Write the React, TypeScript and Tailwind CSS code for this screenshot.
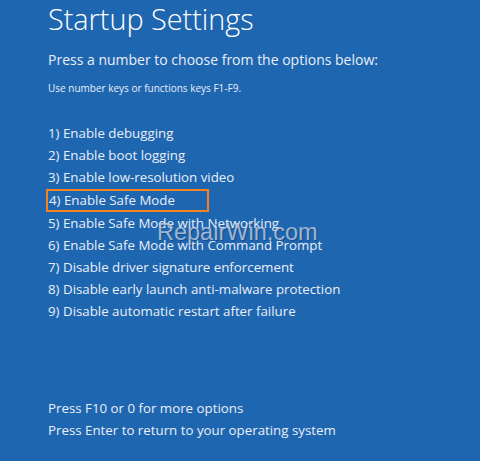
export default function App() {
  const options = [
    "1) Enable debugging",
    "2) Enable boot logging",
    "3) Enable low-resolution video",
    "4) Enable Safe Mode",
    "5) Enable Safe Mode with Networking",
    "6) Enable Safe Mode with Command Prompt",
    "7) Disable driver signature enforcement",
    "8) Disable early launch anti-malware protection",
    "9) Disable automatic restart after failure",
  ];

  return (
    <div
      className="relative w-[480px] h-[461px] overflow-hidden bg-[#1f66b1] text-[#e9eff7]"
      style={{ fontFamily: '"Open Sans", "Noto Sans", sans-serif' }}
    >
      <div className="pl-[48px] pt-[1px]">
        <h1 className="text-[28.8px] font-light leading-[36px] text-white">Startup Settings</h1>
        <p className="mt-[12px] text-[14px] leading-[22px]">Press a number to choose from the options below:</p>
        <p className="mt-[8px] text-[10px] leading-[18px]">Use number keys or functions keys F1-F9.</p>

        <ul className="mt-[25px]">
          {options.map((o, i) => (
            <li key={o} className="text-[13.3px] leading-[22.2px]">
              {i === 3 ? (
                <span className="-ml-[2px] inline-block w-[163px] border-2 border-[#f5821f] pl-[1px] leading-[19px]">
                  {o}
                </span>
              ) : (
                o
              )}
            </li>
          ))}
        </ul>

        <div className="mt-[74px]">
          <p className="text-[13.3px] leading-[22.2px]">Press F10 or 0 for more options</p>
          <p className="text-[13.3px] leading-[22.2px]">Press Enter to return to your operating system</p>
        </div>
      </div>

      {/* watermark */}
      <div
        className="absolute left-[157px] top-[217px] text-[23.5px] leading-[30px] text-[#c9d6e6]/75"
        style={{ fontFamily: '"Liberation Sans", Arial, sans-serif', textShadow: "1px 1px 1px rgba(20,50,90,0.5)" }}
      >
        RepairWin.com
      </div>
    </div>
  );
}
